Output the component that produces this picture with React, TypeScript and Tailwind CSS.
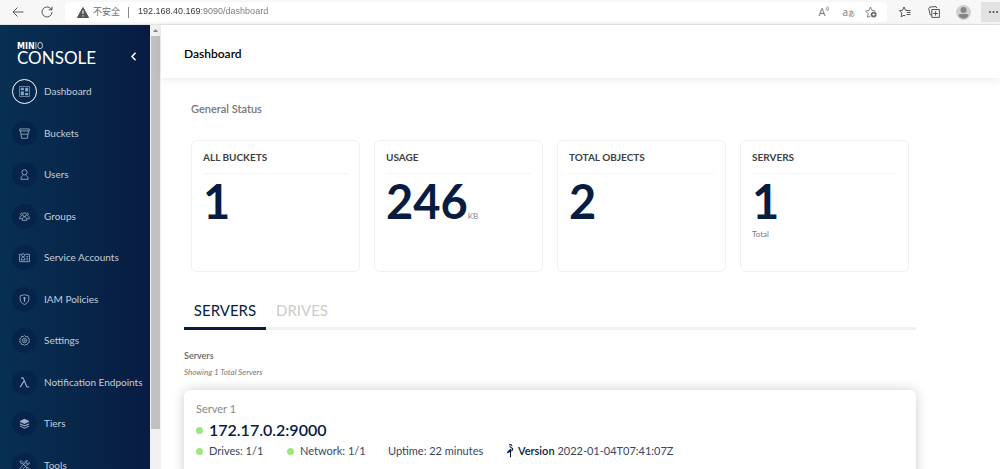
import { useState, type ReactNode } from "react";

type MenuItem = { label: string; icon: ReactNode };

const menuItems: MenuItem[] = [
    {
        label: "Dashboard",
        icon: (
            <>
                <path d="M.5.5h11v11H.5z" strokeWidth=".8" />
                <path d="M2 2h3.300v2.500H2zM2 6h3.300v4H2zM6.700 2H10v4H6.700zM6.700 7.500H10V10H6.700z" fill="currentColor" stroke="none" />
            </>
        ),
    },
    {
        label: "Buckets",
        icon: <path d="M.8 1h10.4v2.2H.8zM1.6 3.2l1.2 8h6.4l1.2-8M2.2 6.8h7.6" />,
    },
    {
        label: "Users",
        icon: (
            <>
                <circle cx="6" cy="3.6" r="2.8" />
                <path d="M4.500 6.200C4.300 7.500 2 8 2 11.200h8C10 8 7.700 7.500 7.500 6.200" />
            </>
        ),
    },
    {
        label: "Groups",
        icon: (
            <>
                <circle cx="6" cy="4" r="2" />
                <path d="M3.500 10.200C3.500 7.600 4.500 6.500 6 6.500s2.500 1.100 2.500 3.700z" />
                <path d="M3.400 2.200a1.500 1.500 0 0 0-.6 2.900C1.500 5.600.7 6.500.7 8.400h2.400M8.600 2.200a1.500 1.500 0 0 1 .6 2.900c1.300.5 2.100 1.400 2.100 3.300H8.900" />
            </>
        ),
    },
    {
        label: "Service Accounts",
        icon: (
            <>
                <path d="M2.500 2.500H.6v8h10.800v-8H6.800" />
                <circle cx="4.500" cy="3.600" r="1.700" />
                <path d="M2.500 8.700c0-2 .7-3 2-3s2 1 2 3zM8 5h2M8 6.800h2M8 8.600h2" />
            </>
        ),
    },
    {
        label: "IAM Policies",
        icon: (
            <>
                <path d="M6 .7 10.700 2v3.500c0 3-2 5-4.700 6-2.700-1-4.700-3-4.700-6V2z" />
                <circle cx="6" cy="4.500" r="1.200" fill="currentColor" stroke="none" />
                <path d="M6 5v3.500" strokeWidth="1.300" />
            </>
        ),
    },
    {
        label: "Settings",
        icon: (
            <>
                <path d="m6 .6 1.500 1.300 2-.2.500 1.900 1.500 1-.7 1.600.5 1.800-1.700.9-.7 1.600-1.700-.2L6 11.400l-1.300-1.100-1.800.1-.6-1.700-1.600-1 .6-1.700-.6-1.700 1.600-1 .5-1.700 1.800.1z" />
                <circle cx="6" cy="6" r="2.400" />
                <circle cx="6" cy="6" r=".7" />
            </>
        ),
    },
    {
        label: "Notification Endpoints",
        icon: <path d="M2.200 1h1.500c.8 0 1 .5 1.300 1.200l3 7.300c.3.900.8 1.400 1.600 1.400h1.600M5.700 4 1.300 11" strokeWidth="1.200" />,
    },
    {
        label: "Tiers",
        icon: (
            <>
                <path d="m6 .8 5 2.400v1L6 6.600 1 4.200v-1z" fill="currentColor" stroke="none" />
                <path d="m1 5.600 5 2.400 5-2.400v1.500L6 9.400 1 7.100zM1 8.300l5 2.300 5-2.300v.9l-5 2.400-5-2.400z" fill="currentColor" stroke="none" />
            </>
        ),
    },
    {
        label: "Tools",
        icon: (
            <>
                <path d="M1 1.500 2.500.8l2 2-.2 1.300 4.200 4.200 1.200-.1 1.800 1.800-1.400 1.400-1.800-1.800.1-1.200-4.300-4.200-1.300.1z" />
                <path d="M11.200 2.600 9.600 4.200 8 3.900l-.2-1.500L9.300.8C7.500.3 6.200 1.500 6.600 3.300L5.300 4.700M4.400 5.800.9 9.200c-.8 1.200.8 2.700 2 1.900l3.300-3.400M7.500 6.300l1-1c1.700.4 3-.9 2.700-2.700" />
            </>
        ),
    },
];

const stats = [
    { title: "ALL BUCKETS", value: "1" },
    { title: "USAGE", value: "246", unit: "KB" },
    { title: "TOTAL OBJECTS", value: "2" },
    { title: "SERVERS", value: "1", caption: "Total" },
];

const tabs = ["SERVERS", "DRIVES"];

function LineIcon(props: { className?: string; viewBox?: string; children: ReactNode }) {
    return (
        <svg
            className={props.className}
            viewBox={props.viewBox || "0 0 12 12"}
            fill="none"
            stroke="currentColor"
            strokeWidth=".9"
            strokeLinejoin="round"
            aria-hidden="true"
        >
            {props.children}
        </svg>
    );
}

function BrowserBar() {
    return (
        <div className="flex h-[25px] shrink-0 items-center border-b border-[#e4e4e4] bg-[#f7f7f7] text-[#444]">
            <button type="button" aria-label="Back" className="ml-3 h-3 w-3">
                <LineIcon className="h-3 w-3"><path d="M11.500 6H1M5.500 1.500 1 6l4.500 4.500" /></LineIcon>
            </button>
            <button type="button" aria-label="Refresh" className="ml-[17px] h-3 w-3">
                <LineIcon className="h-3 w-3"><path d="M11 6.200A5 5 0 1 1 9.800 2.700l1.200 1M11 .6v3.200H7.800" /></LineIcon>
            </button>

            <div className="ml-3 flex h-5 flex-1 items-center rounded-sm bg-white pl-3">
                <svg className="h-[11px] w-3" viewBox="0 0 12 11" aria-hidden="true">
                    <path d="M6 .5 11.500 10.500H.5z" fill="#555" stroke="#555" strokeLinejoin="round" />
                    <path d="M6 3.500v3.500M6 8.200v1.200" stroke="#fff" strokeWidth="1.100" />
                </svg>
                <span className="ml-1 font-['Noto_Sans_CJK_SC',sans-serif] text-[9px] text-[#707070]">不安全</span>
                <span className="ml-2 h-[11px] w-px bg-[#888]" />
                <input
                    type="text"
                    aria-label="Address"
                    defaultValue="192.168.40.169:9090/dashboard"
                    className="ml-[9px] min-w-0 flex-1 bg-[linear-gradient(90deg,#333_62px,#777_62px)] bg-clip-text font-['Liberation_Sans',sans-serif] text-[9px] text-transparent outline-none"
                />
                <button type="button" aria-label="Read aloud" className="flex h-3 items-start font-['Open_Sans',sans-serif] text-[11px] leading-3 text-[#777]">
                    A
                    <LineIcon className="h-[6px] w-[5px] shrink-0" viewBox="0 0 5 6"><path d="M1 1.500q1 1 0 2.500M2.500.5q2 2 0 4.500" /></LineIcon>
                </button>
                <button type="button" aria-label="Translate" className="ml-3 font-['Open_Sans',sans-serif] text-[10px] leading-3 text-[#777]">
                    a<span className="font-['Noto_Sans_CJK_SC',sans-serif] text-[7px]">あ</span>
                </button>
                <button type="button" aria-label="Add to favourites" className="mx-[10px] h-3 w-3 text-[#777]">
                    <LineIcon className="h-3 w-3">
                        <path d="M5.500 10 2.500 11.200 3 7.500.6 5l3.400-.6L5.500 1l1.600 3.400 3.400.6" />
                        <circle cx="8.700" cy="8.600" r="2.900" fill="#666" stroke="none" />
                        <path d="M8.700 7v3.200M7.100 8.600h3.200" stroke="#fff" strokeWidth=".8" />
                    </LineIcon>
                </button>
            </div>

            <button type="button" aria-label="Favourites" className="ml-3 h-3 w-3">
                <LineIcon className="h-3 w-3"><path d="M8 4.400 6.500 4.200 5 1 3.600 4.200.6 4.700 2.800 7l-.6 3.800L5 9.200l1.500.8M7.500 4.500h4M8 6.500h3.500M7.500 8.500h4" /></LineIcon>
            </button>
            <button type="button" aria-label="Collections" className="ml-[17px] h-3 w-3">
                <LineIcon className="h-3 w-3">
                    <path d="M3.800 3.500h7.600v7.900H3.800zM7.600 5.200v4.500M5.300 7.500h4.600M3.500 8.800H2.200L.7 2.500 2 1l6-.4.900 1.500" />
                </LineIcon>
            </button>
            <button type="button" aria-label="Profile" className="ml-4 h-[15px] w-[15px] overflow-hidden rounded-full bg-[#d0d0d0]">
                <svg viewBox="0 0 15 15" fill="#858585" aria-hidden="true">
                    <circle cx="7.500" cy="5" r="3" />
                    <path d="M2.500 11q0-2 2-2h6q2 0 2 2-2 2.700-5 2.700T2.500 11z" />
                </svg>
            </button>
            <button type="button" aria-label="More" className="ml-[10px] flex h-5 w-[19px] items-center justify-end bg-[#e2e2e2] pr-[2px]">
                <svg className="h-[2px] w-[9px]" viewBox="0 0 9 2" fill="#444" aria-hidden="true">
                    <circle cx="1" cy="1" r="1" />
                    <circle cx="4.500" cy="1" r="1" />
                    <circle cx="8" cy="1" r="1" />
                </svg>
            </button>
        </div>
    );
}

function Sidebar() {
    return (
        <aside className="w-[150px] shrink-0 overflow-hidden bg-linear-to-r from-[#073052] to-[#081c42] text-white">
            <div className="flex h-[46px] items-center justify-between pr-3 pl-[17px]">
                <div className="pt-3">
                    <div className="font-['DejaVu_Sans',sans-serif] text-[8px] leading-[7px]">
                        <b>MIN</b><span className="opacity-80">IO</span>
                    </div>
                    <div className="text-[17px] leading-4">CONSOLE</div>
                </div>
                <button type="button" aria-label="Collapse menu" className="mt-4 h-[9px] w-2">
                    <svg className="h-[9px] w-2" viewBox="0 0 8 9" fill="none" stroke="currentColor" strokeWidth="1.500" aria-hidden="true">
                        <path d="M5.500.8 2 4.500l3.500 3.700" />
                    </svg>
                </button>
            </div>
            <nav className="grid h-[415px] auto-rows-fr">
                {menuItems.map((item, index) => (
                    <a key={item.label} href="#" className="flex items-center gap-[7px] pl-3 text-[10px] text-[#c3cedb]">
                        <span
                            className={
                                index === 0
                                    ? "flex h-[25px] w-[25px] items-center justify-center rounded-full border border-white bg-[#06274c] text-[#8fa5bd]"
                                    : "flex h-[25px] w-[25px] items-center justify-center rounded-full bg-[#06244a] text-[#9db1c7]"
                            }
                        >
                            <LineIcon className="h-[11px] w-[11px]">{item.icon}</LineIcon>
                        </span>
                        {item.label}
                    </a>
                ))}
            </nav>
        </aside>
    );
}

function StatCard(props: { title: string; value: string; unit?: string; caption?: string }) {
    return (
        <div className="h-[132px] rounded-md border border-[#f0f0f0] px-[11px] pt-[9px]">
            <h3 className="border-b border-[#f4f4f4] pb-[9px] text-[10px] leading-[14px] font-bold text-[#404144]">{props.title}</h3>
            <div className="text-[47px] leading-[55px] font-bold text-[#081c42]">
                {props.value}
                {props.unit && <span className="text-[8px] font-normal text-[#888]">{props.unit}</span>}
            </div>
            {props.caption && <div className="text-[8px] leading-[10px] text-[#777]">{props.caption}</div>}
        </div>
    );
}

function Dot() {
    return <span className="h-[7px] w-[7px] shrink-0 rounded-full bg-[#9be77f]" />;
}

function ServerCard() {
    return (
        <article className="mt-3 rounded-md bg-white px-3 pt-3 pb-6 text-[#081c42] shadow-[0_0_12px_rgba(0,0,0,0.2)]">
            <div className="text-[11px] leading-[14px] text-[#888]">Server 1</div>
            <div className="mt-[3px] flex items-center gap-[6px] text-base leading-[22px] font-semibold">
                <Dot />
                172.17.0.2:9000
            </div>
            <div className="mt-[2px] flex items-center text-[11px] leading-4 text-[#3a4564]">
                <span className="flex w-[91px] items-center gap-[6px]"><Dot />Drives: 1/1</span>
                <span className="flex w-[101px] items-center gap-[6px]"><Dot />Network: 1/1</span>
                <span className="w-[118px]">Uptime: 22 minutes</span>
                <svg className="mr-1 h-[14px] w-2" viewBox="0 0 8 14" fill="none" stroke="#081c42" aria-hidden="true">
                    <path d="M3.200 1C4.500.2 6 1 5.800 2.200M3.500 2.400l2.800 2c.8.900.3 1.800-1 2.500M4.500 6.500V13.200" strokeWidth="1.100" />
                    <path d="M.4 9.400Q1.800 5.800 5.300 4.600L5 7.800z" fill="#081c42" stroke="none" />
                </svg>
                <span><b className="font-semibold text-[#081c42]">Version</b> 2022-01-04T07:41:07Z</span>
            </div>
        </article>
    );
}

export default function App() {
    const [activeTab, setActiveTab] = useState("SERVERS");

    return (
        <div className="flex h-screen flex-col overflow-hidden bg-white font-['Lato',sans-serif]">
            <BrowserBar />
            <div className="flex min-h-0 flex-1">
                <Sidebar />

                {/* Sidebar scrollbar */}
                <div className="flex w-[11px] shrink-0 flex-col items-center bg-[#f1f1f1]">
                    <svg className="my-1 h-[3px] w-[5px]" viewBox="0 0 5 3" fill="#888" aria-hidden="true"><path d="M2.500 0 5 3H0z" /></svg>
                    <div className="h-[393px] w-[9px] bg-[#c1c1c1]" />
                </div>

                <main className="min-w-0 flex-1">
                    <header className="flex h-[53px] items-center pl-[23px] shadow-[0_2px_8px_rgba(0,0,0,0.08)]">
                        <h1 className="pt-1 text-xs font-semibold text-black">Dashboard</h1>
                    </header>

                    <div className="pt-6 pr-[84px] pl-[23px]">
                        <section className="px-[7px]">
                            <h2 className="text-[11px] leading-[14px] font-semibold text-[#777]">General Status</h2>
                            <div className="mt-6 grid grid-cols-4 gap-[14px]">
                                {stats.map((stat) => (
                                    <StatCard key={stat.title} {...stat} />
                                ))}
                            </div>
                        </section>

                        <div role="tablist" className="mt-6 flex h-[34px] border-b-[3px] border-[#f1f1f1] text-[15px]">
                            {tabs.map((tab) => (
                                <button
                                    key={tab}
                                    type="button"
                                    role="tab"
                                    aria-selected={tab === activeTab}
                                    onClick={() => setActiveTab(tab)}
                                    className={
                                        tab === activeTab
                                            ? "-mb-[3px] w-[82px] border-b-[3px] border-[#081c42] pb-[2px] text-[#081c42]"
                                            : "-mb-[3px] w-[72px] border-b-[3px] border-transparent pb-[2px] text-[#ccc]"
                                    }
                                >
                                    {tab}
                                </button>
                            ))}
                        </div>

                        <h2 className="mt-5 text-[9px] leading-3 font-semibold text-[#666]">Servers</h2>
                        <p className="mt-1 text-[8px] leading-3 text-[#777] italic">Showing 1 Total Servers</p>
                        <ServerCard />
                    </div>
                </main>
            </div>
        </div>
    );
}
